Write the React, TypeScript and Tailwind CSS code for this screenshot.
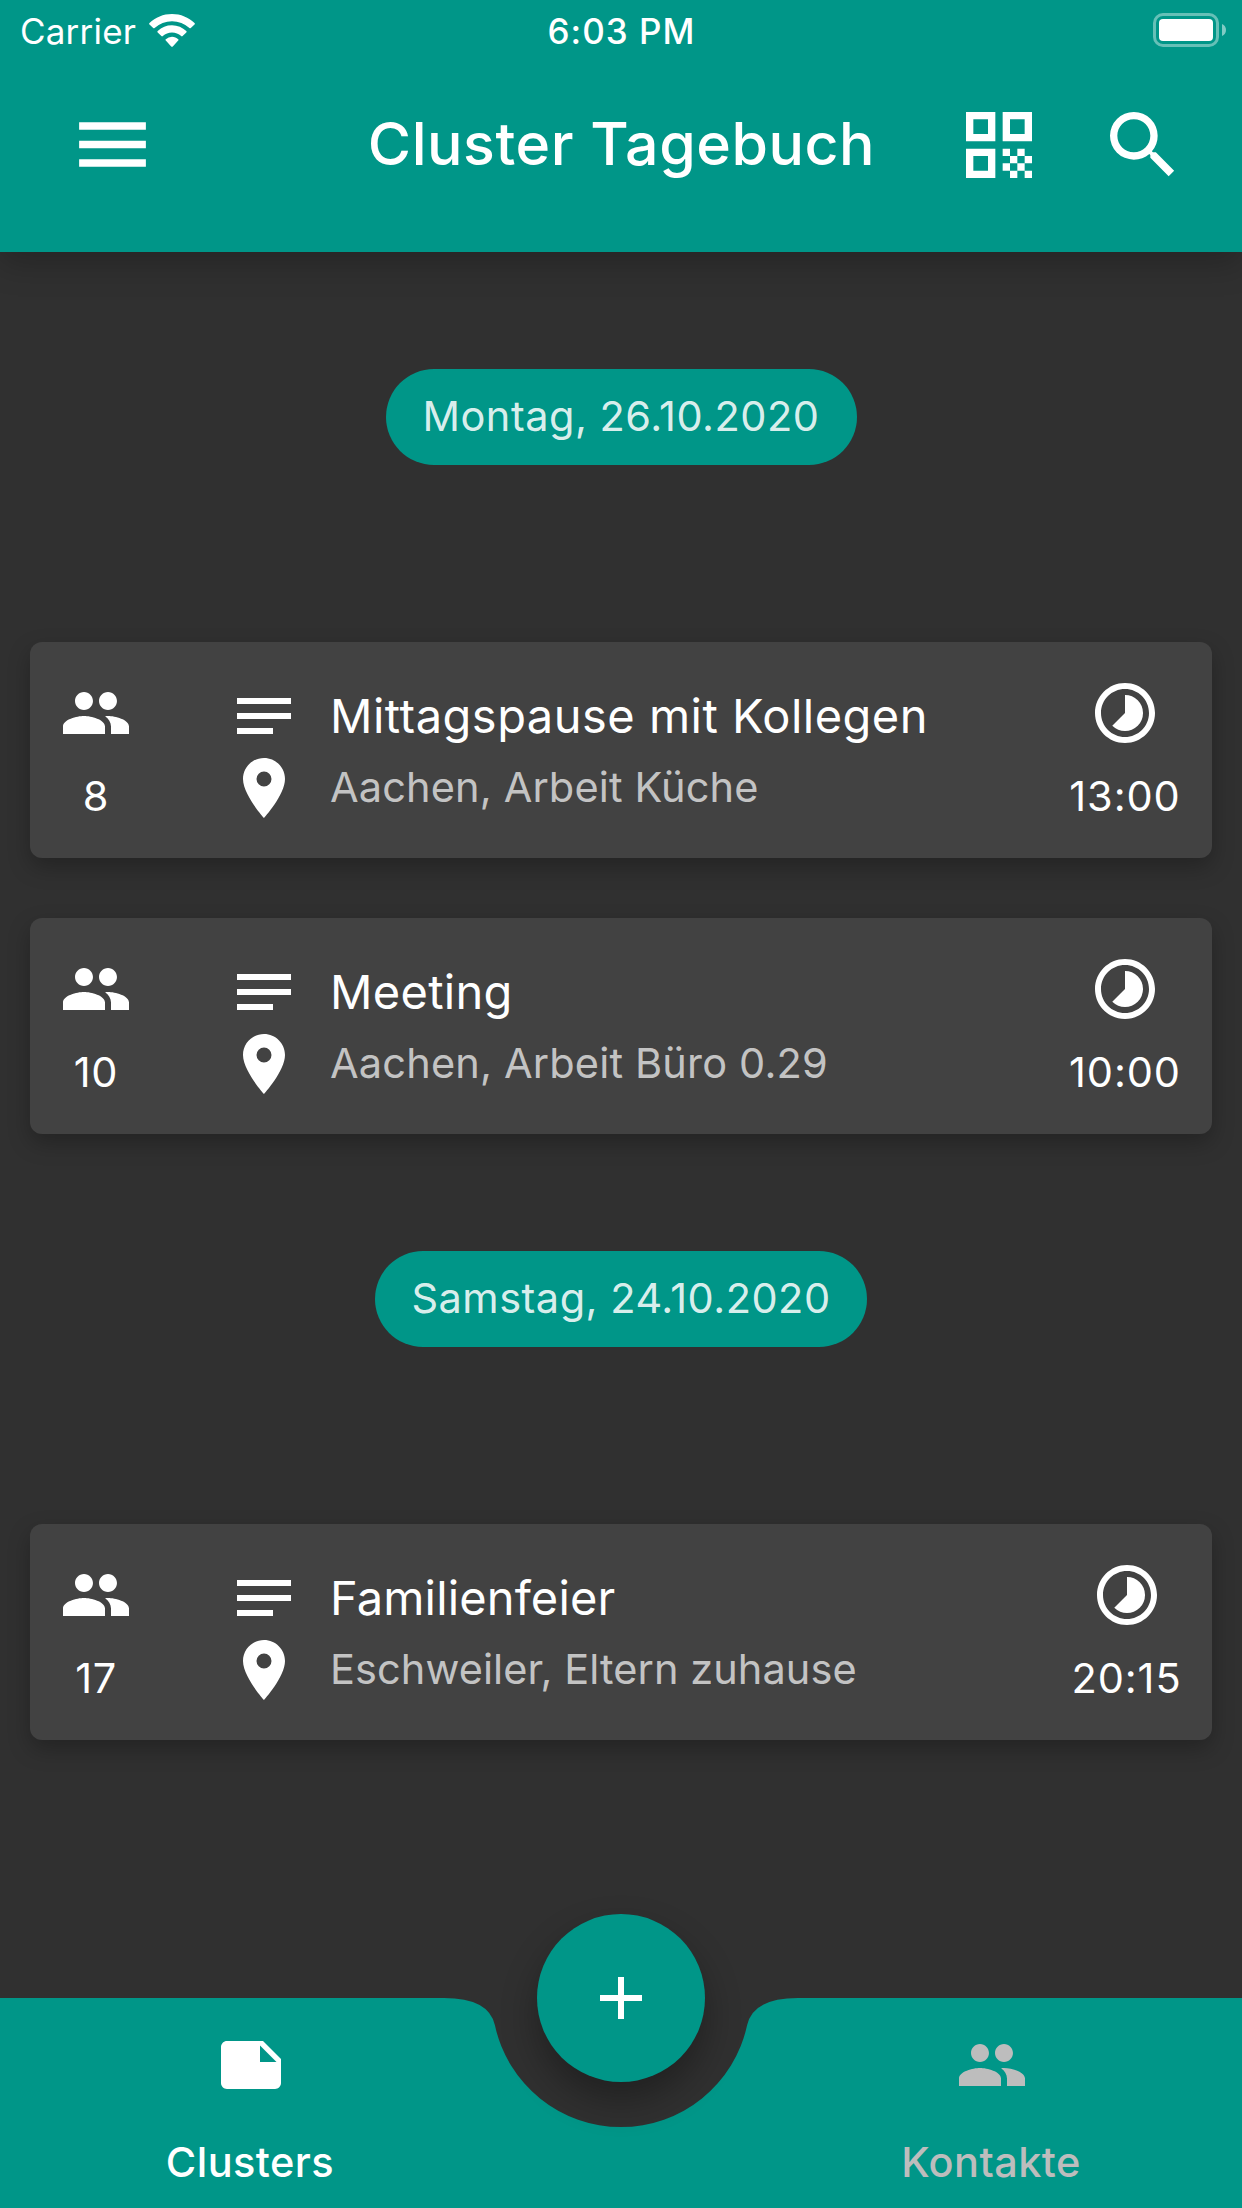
import React from "react";
import {
  MdAdd,
  MdMenu,
  MdNote,
  MdNotes,
  MdPeople,
  MdPlace,
  MdQrCode,
  MdSearch,
  MdTimelapse,
} from "react-icons/md";

type Entry = {
  people: number;
  title: string;
  place: string;
  time: string;
  titleClass: string;
  placeClass: string;
  timeClass: string;
};

function StatusBar() {
  return (
    <div className="grid h-[60px] grid-cols-3 items-center pl-5 pr-4 text-[35px] leading-[58px]">
      <div className="flex items-center gap-[13px]">
        <span className="pt-0.5 tracking-[0.2px]">Carrier</span>
        <svg className="h-[33px] w-[46px]" viewBox="0 0 46 33" fill="#fff">
          <path d="M23 0C31.700 0 39.600 3.400 45.500 9a1 1 0 0 1 0 1.500L41.800 14a1 1 0 0 1-1.400 0A25.500 25.500 0 0 0 5.600 14a1 1 0 0 1-1.400 0L.5 10.500A1 1 0 0 1 .5 9C6.400 3.400 14.300 0 23 0Z" />
          <path d="M23 11.300c5.500 0 10.600 2.200 14.300 5.800a1 1 0 0 1 0 1.500l-3.700 3.500a1 1 0 0 1-1.400 0 13.500 13.500 0 0 0-18.400 0 1 1 0 0 1-1.400 0l-3.700-3.500a1 1 0 0 1 0-1.500A20.500 20.500 0 0 1 23 11.300Z" />
          <path d="M23 22.700c2.400 0 4.600 1 6.200 2.500a1 1 0 0 1 0 1.400l-5.400 5.800a1.100 1.100 0 0 1-1.600 0l-5.400-5.800a1 1 0 0 1 0-1.400A9 9 0 0 1 23 22.700Z" />
        </svg>
      </div>
      <div className="pr-[3px] pt-0.5 text-center font-medium tracking-[1px]">6:03 PM</div>
      <div className="flex justify-end">
        <svg className="h-[34px] w-[73px]" viewBox="0 0 73 34">
          <rect x="1.500" y="1.500" width="63" height="31" rx="8.500" fill="none" stroke="#fff" strokeOpacity=".4" strokeWidth="3" />
          <rect x="6" y="6" width="54" height="22" rx="4" fill="#fff" />
          <path d="M69 11c2.500 1 4 3.300 4 6s-1.500 5-4 6Z" fill="#fff" fillOpacity=".5" />
        </svg>
      </div>
    </div>
  );
}

function AppBar() {
  return (
    <header className="relative z-10 h-[252px] bg-[#009688] shadow-[0_12px_30px_rgba(0,0,0,0.22)]">
      <StatusBar />
      <div className="flex h-[169px] items-center pl-[68px] pr-[55px]">
        <MdMenu className="size-[89px] shrink-0" />
        <h1 className="flex-1 whitespace-nowrap pb-px pl-[131px] text-center text-[59px] font-medium leading-[70px]">
          <span className="tracking-[0.55px]">Cluster Tagebuch</span>
        </h1>
        <MdQrCode className="mr-[56px] size-[88px] shrink-0" />
        <MdSearch className="size-[88px] shrink-0" />
      </div>
    </header>
  );
}

function DatePill({ text, className }: { text: string; className: string }) {
  return (
    <div className={"mx-auto flex h-24 items-center justify-center rounded-full bg-[#009688] pb-px text-[41.500px] tracking-[0.5px] text-white/87 " + className}>
      <span>{text}</span>
    </div>
  );
}

function EntryCard({ e }: { e: Entry }) {
  return (
    <article className="mx-[30px] flex h-[216px] rounded-xl bg-[#424242] pt-[35px] shadow-[0_9px_22px_rgba(0,0,0,0.26)]">
      <div className="ml-[30px] flex w-[72px] flex-col items-center">
        <MdPeople className="size-[72px]" />
        <span className="mt-5 text-[41.500px] leading-[54px] tracking-[0.6px]">{e.people}</span>
      </div>
      <div className="ml-24 flex flex-col pt-[3px]">
        <MdNotes className="size-[72px]" />
        <MdPlace className="size-[72px]" />
      </div>
      <div className="ml-[30px] flex flex-1 flex-col whitespace-nowrap pt-[9px]">
        <span className={"text-[47px] leading-[60px] " + e.titleClass}>{e.title}</span>
        <span className={"mt-[14px] text-[41.500px] leading-[54px] text-white/70 " + e.placeClass}>{e.place}</span>
      </div>
      <div className={"mr-[32px] flex flex-col items-center " + e.timeClass}>
        <MdTimelapse className="size-[72px]" />
        <span className="mt-5 text-[41.500px] leading-[54px] tracking-[0.9px]">{e.time}</span>
      </div>
    </article>
  );
}

function BottomBar() {
  return (
    <nav className="relative h-[210px]">
      <svg className="absolute inset-0 h-full w-full" viewBox="0 0 1242 210">
        <path
          d="M0 0H444Q489 0 494.930 27.340A129 129 0 0 0 747.070 27.340Q753 0 798 0H1242V210H0Z"
          fill="#009688"
        />
      </svg>
      <button className="absolute -top-[84px] left-1/2 flex size-[168px] -translate-x-1/2 items-center justify-center rounded-full bg-[#009688] shadow-[0_18px_36px_rgba(0,0,0,0.32)]">
        <MdAdd className="size-[72px]" />
      </button>
      <div className="relative flex justify-between pt-[31px] text-[41.500px] font-medium tracking-[0.45px]">
        <div className="flex w-[501px] flex-col items-center">
          <MdNote className="size-[72px]" />
          <span className="mt-[34px] pr-px leading-[54px]">Clusters</span>
        </div>
        <div className="flex w-[501px] flex-col items-center text-[#bdbdbd]">
          <MdPeople className="size-[72px]" />
          <span className="mt-[34px] pr-px leading-[54px]">Kontakte</span>
        </div>
      </div>
    </nav>
  );
}

const monday: Entry[] = [
  {
    people: 8,
    title: "Mittagspause mit Kollegen",
    place: "Aachen, Arbeit Küche",
    time: "13:00",
    titleClass: "tracking-[0.49px]",
    placeClass: "tracking-[0.14px]",
    timeClass: "w-[110px]",
  },
  {
    people: 10,
    title: "Meeting",
    place: "Aachen, Arbeit Büro 0.29",
    time: "10:00",
    titleClass: "tracking-[0.3px]",
    placeClass: "tracking-[0.18px]",
    timeClass: "w-[110px]",
  },
];

const saturday: Entry[] = [
  {
    people: 17,
    title: "Familienfeier",
    place: "Eschweiler, Eltern zuhause",
    time: "20:15",
    titleClass: "tracking-[0.15px]",
    placeClass: "tracking-[0.07px]",
    timeClass: "w-[107px]",
  },
];

export default function App() {
  return (
    <div className="flex h-[2208px] w-[1242px] flex-col overflow-hidden bg-[#303030] font-['Inter',sans-serif] text-white">
      <AppBar />
      <main className="flex flex-1 flex-col">
        <DatePill text="Montag, 26.10.2020" className="mt-[117px] w-[471px]" />
        <div className="mt-[177px] flex flex-col gap-[60px]">
          {monday.map((e) => (
            <EntryCard key={e.title} e={e} />
          ))}
        </div>
        <DatePill text="Samstag, 24.10.2020" className="mt-[117px] w-[492px]" />
        <div className="mt-[177px] flex flex-col gap-[60px]">
          {saturday.map((e) => (
            <EntryCard key={e.title} e={e} />
          ))}
        </div>
      </main>
      <BottomBar />
    </div>
  );
}
